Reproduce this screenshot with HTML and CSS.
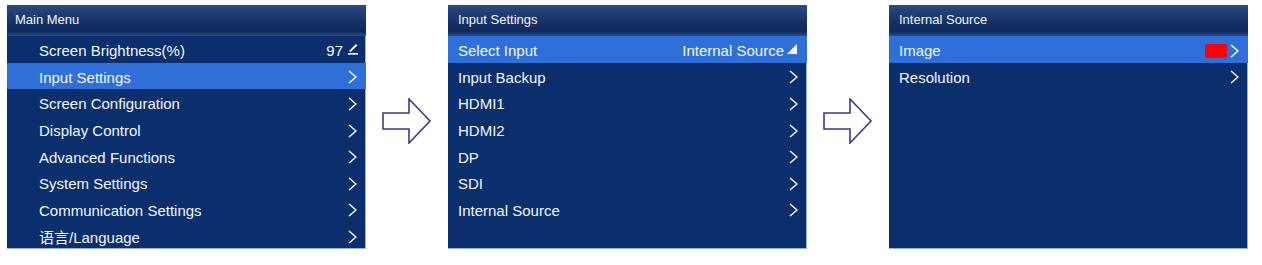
FILE: index.html
```html
<!DOCTYPE html>
<html lang="en">
<head>
    <meta charset="UTF-8">
    <title>Menu Flow</title>
    <link rel="stylesheet" href="styles.css">
</head>
<body>

<div class="flow">
    <div class="panel main">
        <div class="panel-title">Main Menu</div>
        <ul class="menu">
            <li><span>Screen Brightness(%)</span>
                <span class="value">97
                    <svg class="edit" width="10" height="13" viewBox="0 0 10 13"><path d="M1 9 L8 2 L9.5 3.5 L2.5 10 Z" fill="#fff"/><rect x="0" y="11" width="10" height="1.6" fill="#fff"/></svg>
                </span>
            </li>
            <li class="active"><span>Input Settings</span><svg class="chev" width="9" height="14" viewBox="0 0 9 14"><polyline points="1,1 8,7 1,13" fill="none" stroke="#fff" stroke-width="1.4"/></svg></li>
            <li><span>Screen Configuration</span><svg class="chev" width="9" height="14" viewBox="0 0 9 14"><polyline points="1,1 8,7 1,13" fill="none" stroke="#fff" stroke-width="1.4"/></svg></li>
            <li><span>Display Control</span><svg class="chev" width="9" height="14" viewBox="0 0 9 14"><polyline points="1,1 8,7 1,13" fill="none" stroke="#fff" stroke-width="1.4"/></svg></li>
            <li><span>Advanced Functions</span><svg class="chev" width="9" height="14" viewBox="0 0 9 14"><polyline points="1,1 8,7 1,13" fill="none" stroke="#fff" stroke-width="1.4"/></svg></li>
            <li><span>System Settings</span><svg class="chev" width="9" height="14" viewBox="0 0 9 14"><polyline points="1,1 8,7 1,13" fill="none" stroke="#fff" stroke-width="1.4"/></svg></li>
            <li><span>Communication Settings</span><svg class="chev" width="9" height="14" viewBox="0 0 9 14"><polyline points="1,1 8,7 1,13" fill="none" stroke="#fff" stroke-width="1.4"/></svg></li>
            <li><span>语言/Language</span><svg class="chev" width="9" height="14" viewBox="0 0 9 14"><polyline points="1,1 8,7 1,13" fill="none" stroke="#fff" stroke-width="1.4"/></svg></li>
        </ul>
    </div>

    <div class="arrow">
        <svg width="50" height="46" viewBox="0 0 50 46"><path d="M1 15 H27 V1 L48 23 L27 45 V31 H1 Z" fill="#fff" stroke="#3b3a8c" stroke-width="1.6" stroke-linejoin="miter"/></svg>
    </div>

    <div class="panel">
        <div class="panel-title">Input Settings</div>
        <ul class="menu">
            <li class="active"><span>Select Input</span>
                <span class="value">Internal Source
                    <svg class="corner" width="10" height="10" viewBox="0 0 10 10"><polygon points="10,0 10,10 0,10" fill="#fff"/></svg>
                </span>
            </li>
            <li><span>Input Backup</span><svg class="chev" width="9" height="14" viewBox="0 0 9 14"><polyline points="1,1 8,7 1,13" fill="none" stroke="#fff" stroke-width="1.4"/></svg></li>
            <li><span>HDMI1</span><svg class="chev" width="9" height="14" viewBox="0 0 9 14"><polyline points="1,1 8,7 1,13" fill="none" stroke="#fff" stroke-width="1.4"/></svg></li>
            <li><span>HDMI2</span><svg class="chev" width="9" height="14" viewBox="0 0 9 14"><polyline points="1,1 8,7 1,13" fill="none" stroke="#fff" stroke-width="1.4"/></svg></li>
            <li><span>DP</span><svg class="chev" width="9" height="14" viewBox="0 0 9 14"><polyline points="1,1 8,7 1,13" fill="none" stroke="#fff" stroke-width="1.4"/></svg></li>
            <li><span>SDI</span><svg class="chev" width="9" height="14" viewBox="0 0 9 14"><polyline points="1,1 8,7 1,13" fill="none" stroke="#fff" stroke-width="1.4"/></svg></li>
            <li><span>Internal Source</span><svg class="chev" width="9" height="14" viewBox="0 0 9 14"><polyline points="1,1 8,7 1,13" fill="none" stroke="#fff" stroke-width="1.4"/></svg></li>
        </ul>
    </div>

    <div class="arrow">
        <svg width="50" height="46" viewBox="0 0 50 46"><path d="M1 15 H27 V1 L48 23 L27 45 V31 H1 Z" fill="#fff" stroke="#3b3a8c" stroke-width="1.6" stroke-linejoin="miter"/></svg>
    </div>

    <div class="panel">
        <div class="panel-title">Internal Source</div>
        <ul class="menu">
            <li class="active"><span>Image</span>
                <span class="value"><span class="swatch"></span><svg class="chev" width="9" height="14" viewBox="0 0 9 14"><polyline points="1,1 8,7 1,13" fill="none" stroke="#fff" stroke-width="1.4"/></svg></span>
            </li>
            <li><span>Resolution</span><svg class="chev" width="9" height="14" viewBox="0 0 9 14"><polyline points="1,1 8,7 1,13" fill="none" stroke="#fff" stroke-width="1.4"/></svg></li>
        </ul>
    </div>
</div>

</body>
</html>
```

FILE: styles.css
```css
body {
    margin: 0;
    background: #fff;
    font-family: "Liberation Sans", Arial, "Noto Sans CJK SC", sans-serif;
}

.flow {
    display: flex;
    align-items: flex-start;
    padding: 5px 0 0 7px;
}

.panel {
    width: 359px;
    height: 244px;
    background: #0b2f6d;
    box-shadow: inset -1px -1px 0 #8fb3e0;
    display: flex;
    flex-direction: column;
}

.panel-title {
    height: 31px;
    line-height: 29px;
    padding-left: 8px;
    font-size: 13px;
    color: #f2f4fa;
    background: linear-gradient(#2b4a80, #132f64 60%, #0d2a5e 85%, #2c4c86);
}

.panel:nth-child(3) .panel-title,
.panel:nth-child(5) .panel-title {
    padding-left: 10px;
}

.menu {
    list-style: none;
    margin: 0;
    padding: 0;
}

.menu li {
    box-sizing: border-box;
    height: 26.6px;
    display: flex;
    align-items: center;
    justify-content: space-between;
    padding: 3px 9px 0 10px;
    font-size: 15px;
    color: #f4f6fb;
}

.main .menu li {
    padding-left: 32px;
}

.menu li.active {
    background: #2f6fd9;
}

.value {
    display: flex;
    align-items: center;
    gap: 5px;
}

.value .edit {
    margin-bottom: 4px;
    margin-right: -1px;
}

.value .corner {
    margin-left: -2px;
    margin-bottom: 4px;
    margin-right: 1px;
}

.swatch {
    width: 22px;
    height: 14px;
    border-radius: 2px;
    background: #ff0000;
    margin-right: -2px;
}

.arrow {
    width: 82px;
    height: 244px;
    display: flex;
    justify-content: center;
    align-items: center;
}

.arrow svg {
    margin-top: -12px;
}
```
